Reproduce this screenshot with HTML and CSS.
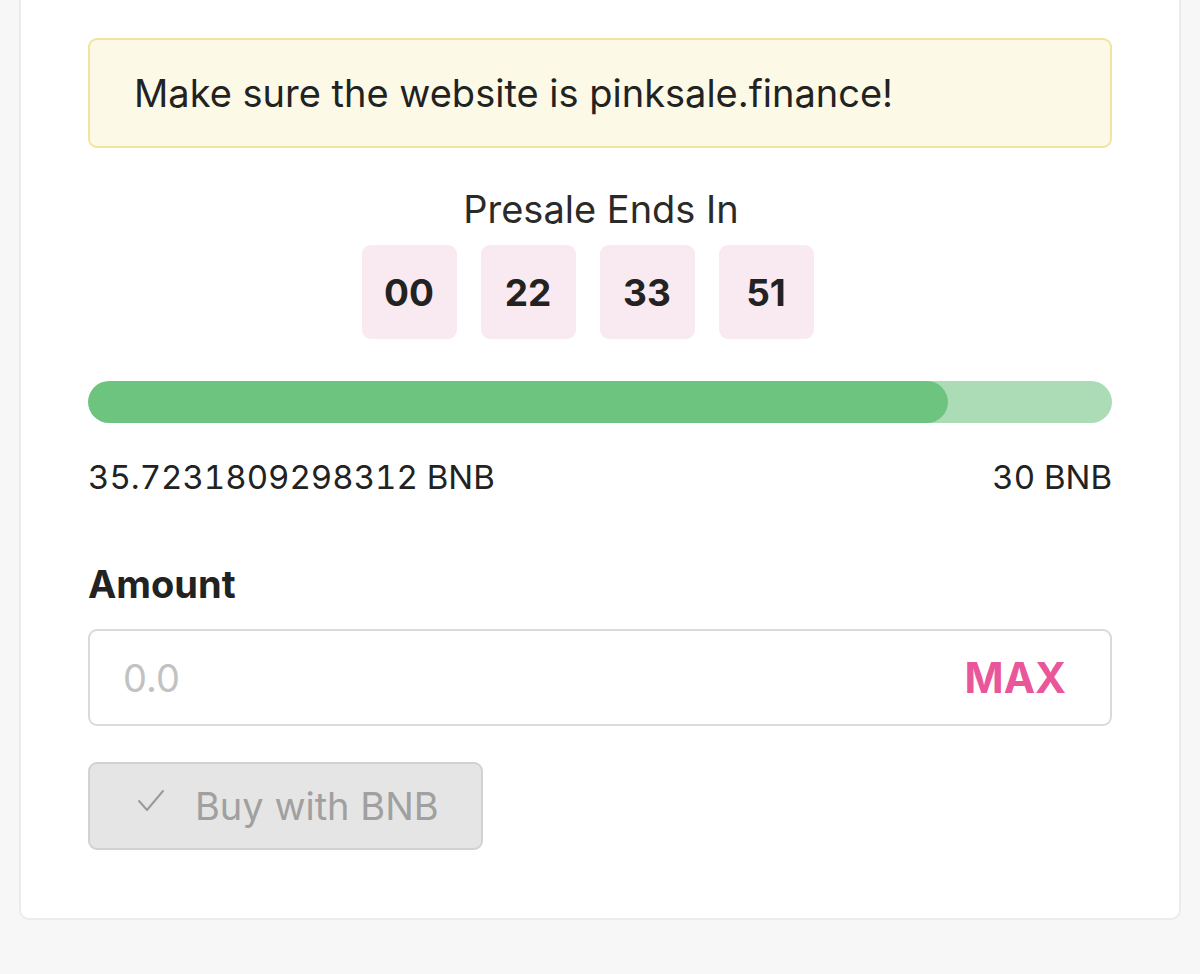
FILE: index.html
```html
<!DOCTYPE html>
<html>
<head>
<meta charset="utf-8">
<link rel="stylesheet" href="styles.css">
</head>
<body>
<div class="card">
  <div class="alert">Make sure the website is pinksale.finance!</div>
  <div class="countdown">
    <div class="cd-title">Presale Ends In</div>
    <div class="cd-boxes">
      <div class="cd-box">00</div>
      <div class="cd-box">22</div>
      <div class="cd-box">33</div>
      <div class="cd-box">51</div>
    </div>
  </div>
  <div class="progress"><div class="progress-fill" style="width:84%"></div></div>
  <div class="progress-labels">
    <span>35.7231809298312 BNB</span>
    <span>30 BNB</span>
  </div>
  <div class="amount-label">Amount</div>
  <div class="amount-input">
    <span class="placeholder">0.0</span>
    <span class="max">MAX</span>
  </div>
  <button class="buy-btn" disabled>
    <svg class="check" width="28" height="26" viewBox="0 0 28 26"><path d="M2 13 L10 22 L26 3" fill="none" stroke="#9a9a9a" stroke-width="2" stroke-linecap="round" stroke-linejoin="round"/></svg>
    <span>Buy with BNB</span>
  </button>
</div>
</body>
</html>
```
FILE: styles.css
```css
* { box-sizing: border-box; }
html, body { margin: 0; padding: 0; }
body {
  background: #f7f7f7;
  font-family: Inter, "Noto Sans", sans-serif;
  color: #222;
  height: 974px;
  overflow: hidden;
}
.card {
  margin-left: 19px;
  width: 1162px;
  margin-top: -20px;
  padding: 58px 67px 68px 69px;
  background: #fff;
  border: 2px solid #ececec;
  border-top: none;
  border-radius: 10px;
  display: flex;
  flex-direction: column;
}
.alert {
  height: 110px;
  margin-left: -2px;
  background: #fdf9e7;
  border: 2px solid #f3e3a0;
  border-radius: 9px;
  display: flex;
  align-items: center;
  padding-left: 44px;
  font-size: 38px;
  color: #222;
}
.countdown {
  display: flex;
  flex-direction: column;
  align-items: center;
  margin-top: 40px;
}
.cd-title {
  font-size: 38px;
  line-height: 42px;
  color: #2a2a2a;
}
.cd-boxes {
  display: flex;
  gap: 24px;
  margin-top: 15px;
  padding-right: 27px;
}
.cd-box {
  width: 95px;
  height: 94px;
  background: #f9e9f1;
  border-radius: 9px;
  display: flex;
  align-items: center;
  justify-content: center;
  font-weight: 700;
  font-size: 37px;
  color: #222;
}
.progress {
  margin-top: 42px;
  margin-left: -2px;
  height: 42px;
  border-radius: 21px;
  background: #acdcb6;
  overflow: hidden;
}
.progress-fill {
  height: 100%;
  background: #6dc47f;
  border-radius: 21px;
}
.progress-labels {
  margin-top: 36px;
  margin-left: -2px;
  display: flex;
  justify-content: space-between;
  font-size: 33px;
  line-height: 36px;
  font-variant-numeric: tabular-nums;
  color: #222;
}
.amount-label {
  margin-top: 68px;
  margin-left: -2px;
  font-size: 38px;
  font-weight: 700;
  line-height: 42px;
  color: #222;
}
.amount-input {
  margin-top: 24px;
  margin-left: -2px;
  height: 97px;
  border: 2px solid #dadada;
  border-radius: 9px;
  display: flex;
  align-items: center;
  justify-content: space-between;
  padding: 0 44px 0 33px;
}
.placeholder {
  font-size: 38px;
  color: #c2c2c2;
}
.max {
  font-size: 42px;
  font-weight: 700;
  color: #e9579a;
}
.buy-btn {
  margin-top: 36px;
  margin-left: -2px;
  width: 395px;
  height: 88px;
  background: #e5e5e5;
  border: 2px solid #d2d2d2;
  border-radius: 9px;
  display: flex;
  align-items: center;
  padding: 0 0 0 47px;
  gap: 30px;
  font-family: inherit;
  font-size: 38px;
  color: #a0a0a0;
}
.check { flex: none; margin-top: -10px; }
```
